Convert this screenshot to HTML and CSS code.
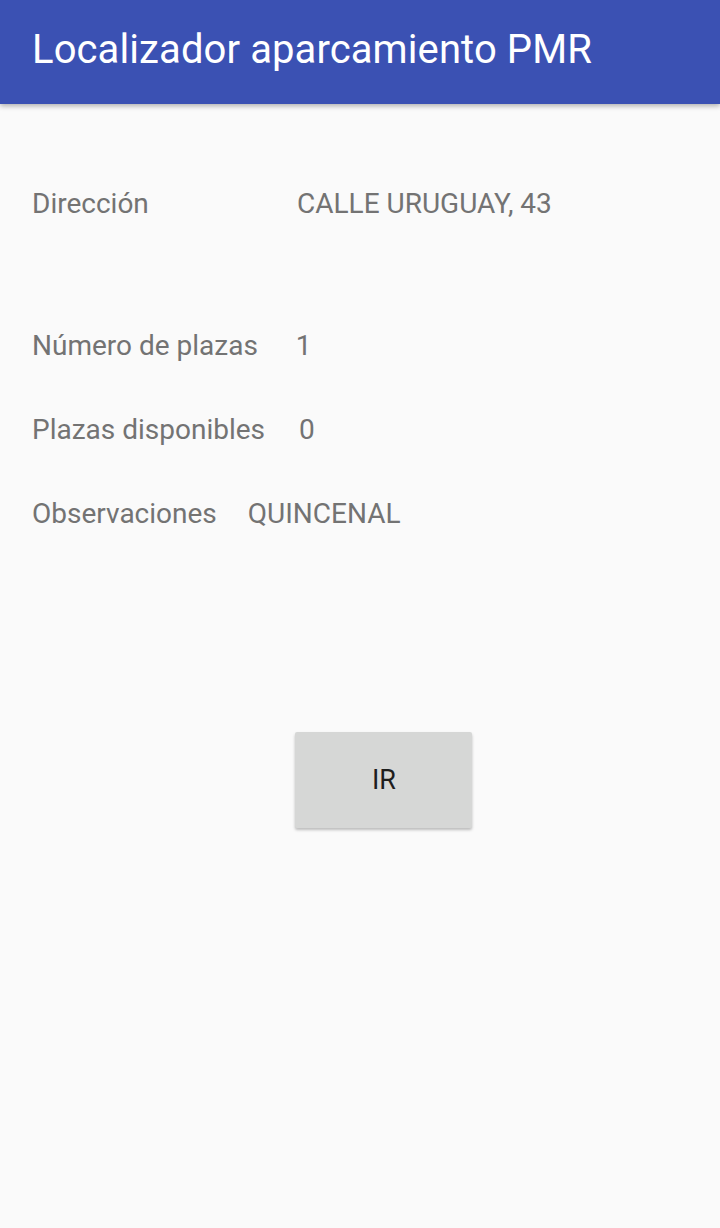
FILE: index.html
```html
<!DOCTYPE html>
<html lang="es">
<head>
<meta charset="utf-8">
<title>Localizador aparcamiento PMR</title>
<link rel="stylesheet" href="styles.css">
</head>
<body>
<header class="appbar">
  <h1 class="title">Localizador aparcamiento PMR</h1>
</header>
<main class="content">
  <div class="row row-first">
    <span class="label label-wide">Dirección</span>
    <span class="value">CALLE URUGUAY, 43</span>
  </div>
  <div class="row row-second">
    <span class="label label-plazas">Número de plazas</span>
    <span class="value">1</span>
  </div>
  <div class="row">
    <span class="label label-disp">Plazas disponibles</span>
    <span class="value">0</span>
  </div>
  <div class="row">
    <span class="label label-obs">Observaciones</span>
    <span class="value">QUINCENAL</span>
  </div>
  <div class="actions">
    <button class="btn">IR</button>
  </div>
</main>
</body>
</html>
```
FILE: styles.css
```css
* { box-sizing: border-box; }
html, body {
  margin: 0;
  padding: 0;
  background: #fafafa;
  font-family: Roboto, "Noto Sans", sans-serif;
  width: 720px;
  height: 1228px;
}
.appbar {
  height: 104px;
  background: #3b51b3;
  display: flex;
  align-items: center;
  padding-left: 32px;
  box-shadow: 0 2px 5px rgba(0,0,0,0.3);
  position: relative;
  z-index: 1;
}
.title {
  margin: 0;
  color: #ffffff;
  font-weight: 400;
  font-size: 40px;
  line-height: 1;
  padding-bottom: 4px;
  letter-spacing: 0.1px;
}
.content {
  padding: 0 32px;
}
.row {
  display: flex;
  align-items: baseline;
  font-size: 28px;
  line-height: 32px;
  color: #737373;
  margin-top: 52px;
}
.row-first { margin-top: 84px; }
.row-second { margin-top: 110px; }
.label-wide { width: 265px; }
.label-plazas { margin-right: 38px; }
.label-disp { margin-right: 34px; }
.label-obs { margin-right: 31px; }
.actions {
  display: flex;
  justify-content: center;
  padding-left: 46px;
  margin-top: 202px;
}
.btn {
  width: 177px;
  height: 96px;
  border: none;
  border-radius: 2px;
  background: #d6d7d6;
  color: #1e1e1e;
  font-family: Roboto, "Noto Sans", sans-serif;
  font-size: 27px;
  box-shadow: 0 2px 3px rgba(0,0,0,0.25);
  padding: 0 0 0 2px;
}
```
